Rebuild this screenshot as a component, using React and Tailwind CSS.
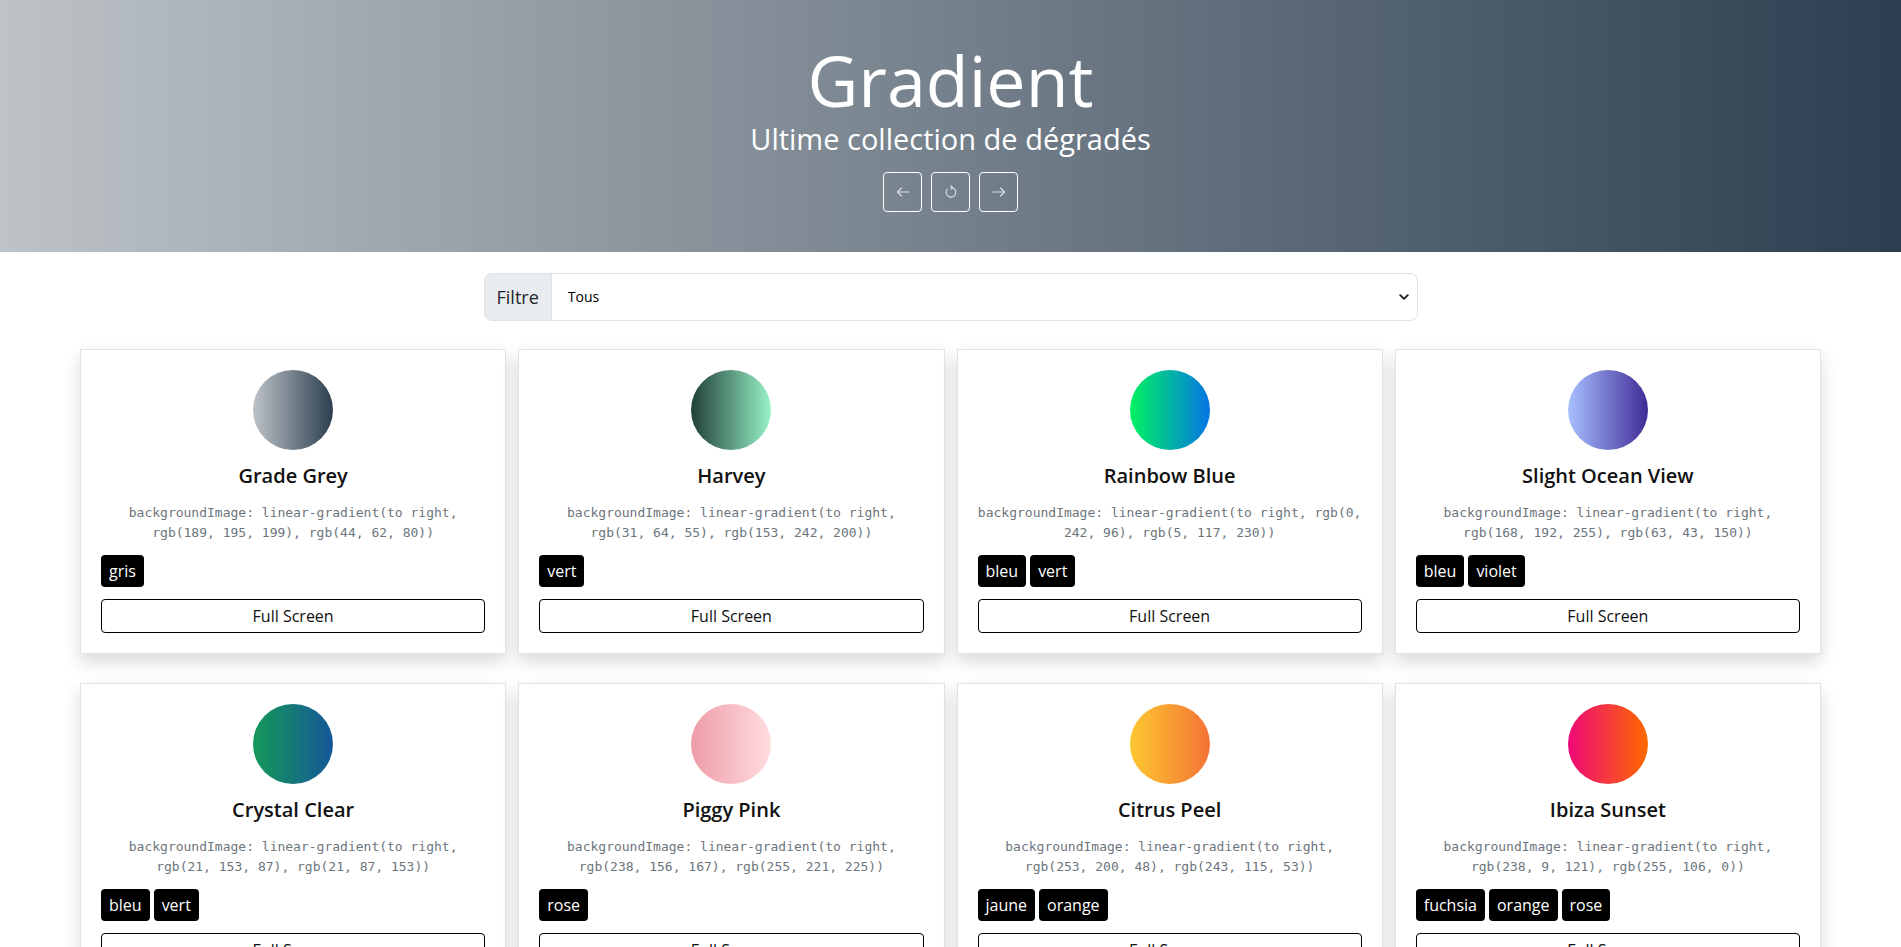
import React, { useState } from 'react';

const gradients = [
  { name: 'Grade Grey', start: 'rgb(189, 195, 199)', end: 'rgb(44, 62, 80)', tags: ['gris'] },
  { name: 'Harvey', start: 'rgb(31, 64, 55)', end: 'rgb(153, 242, 200)', tags: ['vert'] },
  { name: 'Rainbow Blue', start: 'rgb(0, 242, 96)', end: 'rgb(5, 117, 230)', tags: ['bleu', 'vert'] },
  { name: 'Slight Ocean View', start: 'rgb(168, 192, 255)', end: 'rgb(63, 43, 150)', tags: ['bleu', 'violet'] },
  { name: 'Crystal Clear', start: 'rgb(21, 153, 87)', end: 'rgb(21, 87, 153)', tags: ['bleu', 'vert'] },
  { name: 'Piggy Pink', start: 'rgb(238, 156, 167)', end: 'rgb(255, 221, 225)', tags: ['rose'] },
  { name: 'Citrus Peel', start: 'rgb(253, 200, 48)', end: 'rgb(243, 115, 53)', tags: ['jaune', 'orange'] },
  { name: 'Ibiza Sunset', start: 'rgb(238, 9, 121)', end: 'rgb(255, 106, 0)', tags: ['fuchsia', 'orange', 'rose'] },
];

const ArrowLeft = () => (
  <svg width="16" height="16" viewBox="0 0 16 16" fill="none" stroke="currentColor" strokeWidth="1.1" strokeLinecap="round" strokeLinejoin="round">
    <path d="M14 8H2.5" />
    <path d="M6.5 4L2.5 8l4 4" />
  </svg>
);

const ArrowRight = () => (
  <svg width="16" height="16" viewBox="0 0 16 16" fill="none" stroke="currentColor" strokeWidth="1.1" strokeLinecap="round" strokeLinejoin="round">
    <path d="M2 8h11.5" />
    <path d="M9.5 4l4 4-4 4" />
  </svg>
);

const Reset = () => (
  <svg width="16" height="16" viewBox="0 0 16 16" fill="none" stroke="currentColor" strokeWidth="1.1" strokeLinecap="round" strokeLinejoin="round">
    <path d="M8 3.5A4.8 4.8 0 1 1 4.3 5.2" />
    <path d="M8 1.6L9.6 3.5 8 5.2" />
  </svg>
);

const Card = ({ g }) => {
  const bg = `linear-gradient(to right, ${g.start}, ${g.end})`;
  return (
    <div className="bg-white border border-[#e1e3e6] shadow-[0_8px_16px_rgba(0,0,0,0.15)] px-5 pt-5 pb-5 flex flex-col items-center">
      <div className="w-20 h-20 rounded-full" style={{ backgroundImage: bg }}></div>
      <h5 className="mt-[14px] text-xl leading-6 font-semibold text-[#111]">{g.name}</h5>
      <code className="mt-[15px] text-center text-[13px] leading-5 text-[#6c757d] font-['DejaVu_Sans_Mono',monospace]">
        backgroundImage: {bg}
      </code>
      <div className="mt-3 self-stretch flex gap-1">
        {g.tags.map((t) => (
          <span key={t} className="bg-black text-white rounded px-2 py-1 text-base leading-6">{t}</span>
        ))}
      </div>
      <button className="mt-3 w-full border border-black rounded py-1 text-base leading-6 text-[#111] bg-white">
        Full Screen
      </button>
    </div>
  );
};

const App = () => {
  const [filter, setFilter] = useState('Tous');

  return (
    <div className="min-h-screen bg-white font-['Open_Sans',sans-serif] text-[#212529]">

      {/* header */}
      <header className="bg-[linear-gradient(to_right,rgb(189,195,199),rgb(44,62,80))] h-[252px] pt-[45px] flex flex-col items-center text-white">
        <h1 className="text-[70px] leading-none font-normal">Gradient</h1>
        <p className="mt-[9px] text-[29px] leading-[30px] font-normal">Ultime collection de dégradés</p>
        <div className="mt-[18px] flex gap-[9px]">
          <button className="w-[39px] h-10 border border-white rounded flex items-center justify-center text-[#dfe3e6]">
            <ArrowLeft />
          </button>
          <button className="w-[39px] h-10 border border-white rounded flex items-center justify-center text-[#dfe3e6]">
            <Reset />
          </button>
          <button className="w-[39px] h-10 border border-white rounded flex items-center justify-center text-[#dfe3e6]">
            <ArrowRight />
          </button>
        </div>
      </header>

      {/* filtre */}
      <div className="w-[934px] mx-auto mt-[21px] h-12 flex">
        <span className="px-3 flex items-center bg-[#e9ecef] border border-[#dee2e6] rounded-l-lg text-lg text-[#212529]">Filtre</span>
        <div className="relative flex-1">
          <select
            value={filter}
            onChange={(e) => setFilter(e.target.value)}
            className="appearance-none w-full h-full border border-l-0 border-[#dee2e6] rounded-r-lg pl-4 pr-10 text-sm text-black bg-white outline-none"
          >
            <option>Tous</option>
            <option>gris</option>
            <option>vert</option>
            <option>bleu</option>
            <option>violet</option>
            <option>rose</option>
            <option>jaune</option>
            <option>orange</option>
            <option>fuchsia</option>
          </select>
          <svg className="absolute right-[9px] top-1/2 -translate-y-1/2 pointer-events-none" width="10" height="10" viewBox="0 0 16 16" fill="none" stroke="#212529" strokeWidth="3" strokeLinecap="round" strokeLinejoin="round">
            <path d="M2 5l6 6 6-6" />
          </svg>
        </div>
      </div>

      {/* cards */}
      <div className="px-20 mt-[28px] grid grid-cols-4 gap-x-3 gap-y-[29px] pb-10">
        {gradients
          .filter((g) => filter === 'Tous' || g.tags.includes(filter))
          .map((g) => (
            <Card key={g.name} g={g} />
          ))}
      </div>
    </div>
  );
};

export default App;
